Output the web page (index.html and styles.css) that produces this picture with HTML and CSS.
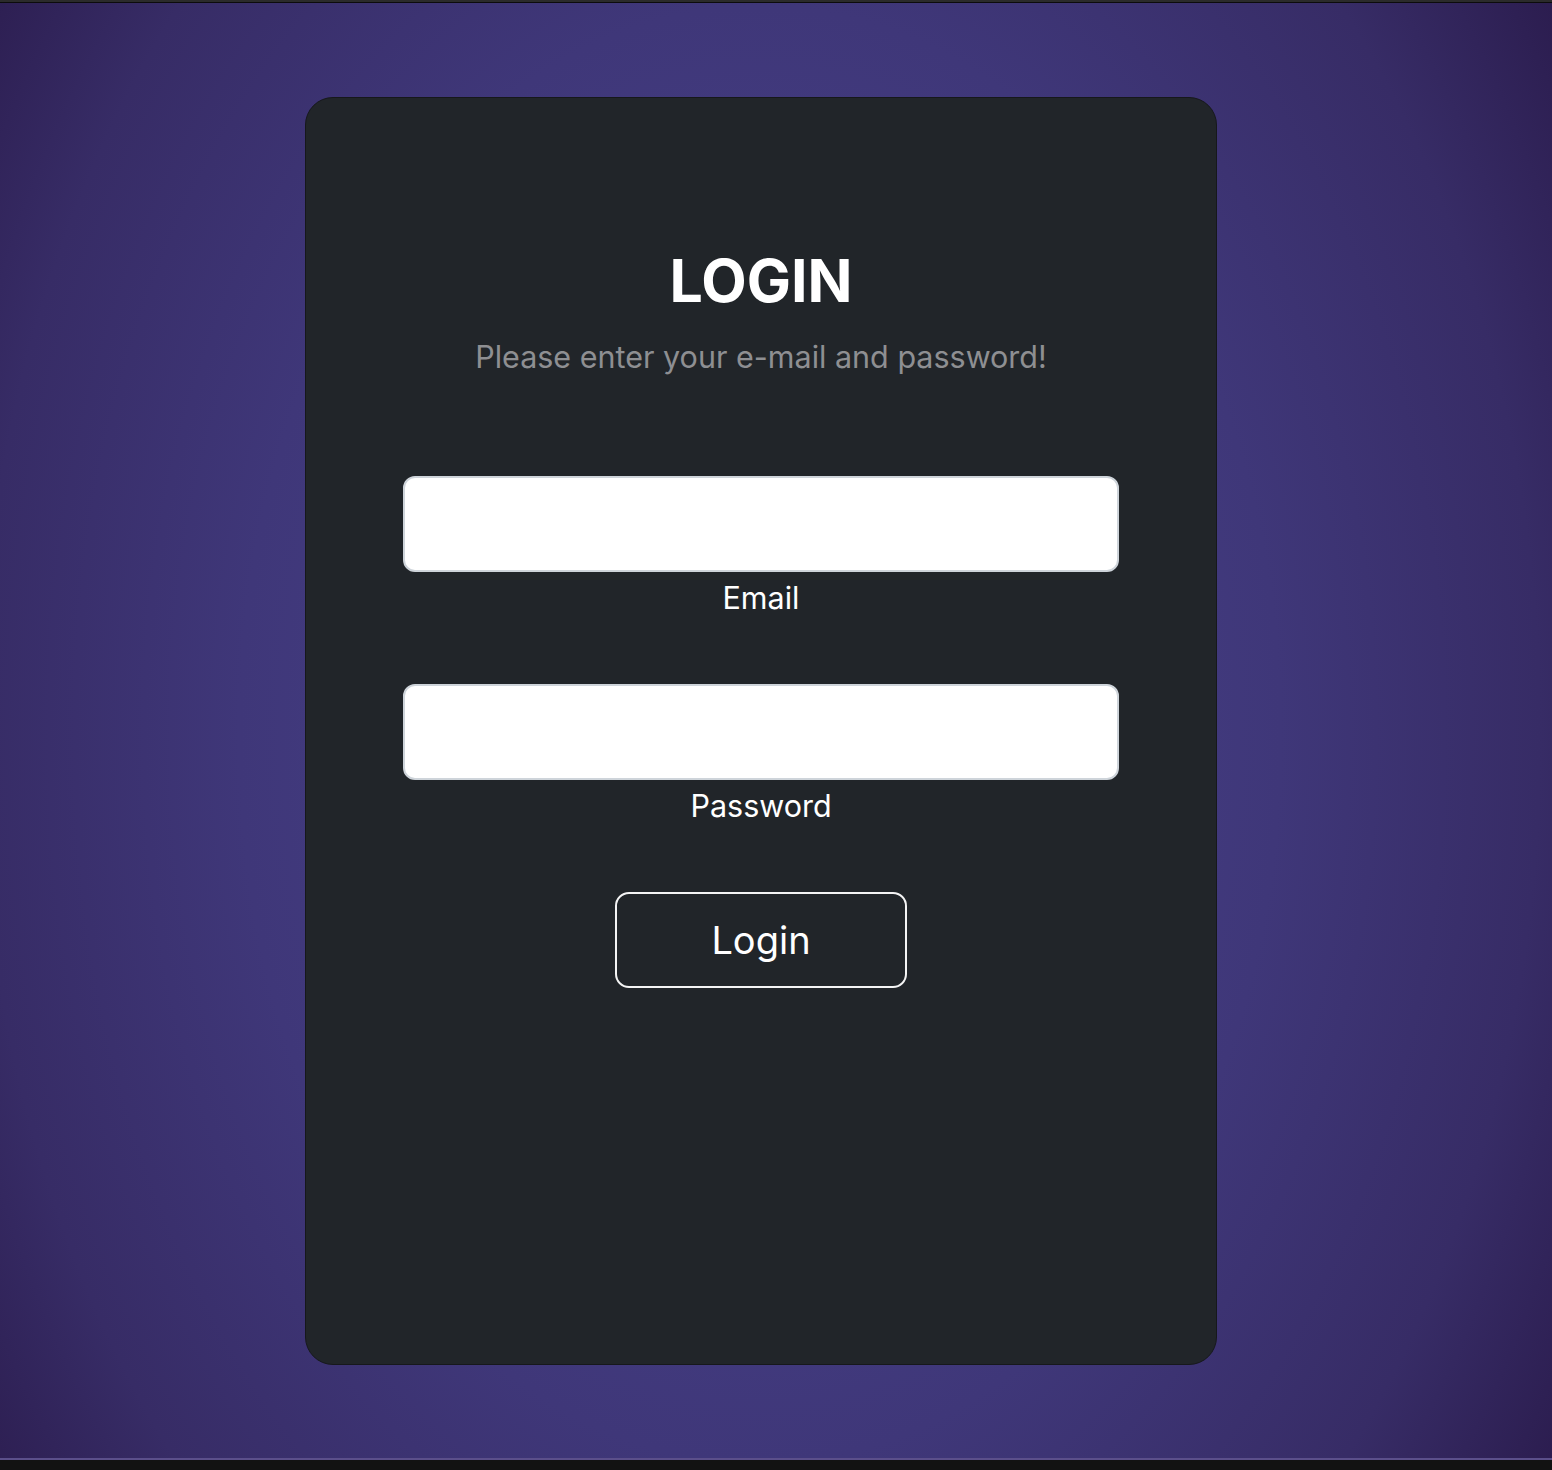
FILE: index.html
```html
<!DOCTYPE html>
<html lang="en">
<head>
<meta charset="utf-8">
<title>Login</title>
<link rel="stylesheet" href="styles.css">
</head>
<body>
<div class="topbar"></div>
<main class="stage">
  <section class="card">
    <h1 class="title">LOGIN</h1>
    <p class="subtitle">Please enter your e-mail and password!</p>
    <form class="form">
      <div class="field">
        <input class="input" type="email" id="email">
        <label class="label" for="email">Email</label>
      </div>
      <div class="field">
        <input class="input" type="password" id="password">
        <label class="label" for="password">Password</label>
      </div>
      <button class="btn" type="button">Login</button>
    </form>
  </section>
</main>
<div class="bottombar"></div>
</body>
</html>
```
FILE: styles.css
```css
* { box-sizing: border-box; }
html, body { margin: 0; padding: 0; }
body {
  width: 1552px;
  height: 1470px;
  overflow: hidden;
  font-family: Inter, "Liberation Sans", sans-serif;
  background: radial-gradient(ellipse 1000px 1400px at 760px 735px, #484289 0%, #443d83 30%, #3f3779 52%, #372c66 78%, #2b1c4e 96%, #281a4a 100%);
  display: flex;
  flex-direction: column;
}
.topbar {
  height: 3px;
  background: #2b2b2b;
  border-bottom: 1px solid #0c0c0c;
}
.stage {
  flex: 1;
  padding: 94px 0 0 305px;
}
.card {
  width: 912px;
  height: 1268px;
  background: #212529;
  border: 1px solid #16181b;
  border-radius: 28px;
  display: flex;
  flex-direction: column;
  align-items: center;
  padding-top: 145px;
}
.title {
  margin: 0;
  color: #fff;
  font-size: 59px;
  font-weight: 700;
  line-height: 76px;
  letter-spacing: 0;
}
.subtitle {
  margin: 16px 0 0;
  color: #8e8f92;
  font-size: 30.5px;
  line-height: 44px;
}
.form {
  margin-top: 97px;
  width: 716px;
  display: flex;
  flex-direction: column;
  align-items: center;
}
.field {
  width: 100%;
  display: flex;
  flex-direction: column;
  align-items: center;
  margin-bottom: 64px;
}
.field:last-of-type { margin-bottom: 64px; }
.input {
  width: 100%;
  height: 96px;
  background: #fff;
  border: 2px solid #ced4da;
  border-radius: 12px;
  outline: none;
}
.label {
  color: #fff;
  font-size: 30.5px;
  line-height: 44px;
  margin-top: 4px;
}
.btn {
  width: 292px;
  height: 96px;
  background: transparent;
  border: 2px solid #f4f4f4;
  border-radius: 14px;
  color: #fff;
  font-family: inherit;
  font-size: 38px;
}
.bottombar {
  height: 12px;
  background: #121212;
  border-top: 2px solid #5b4f8a;
}
```
